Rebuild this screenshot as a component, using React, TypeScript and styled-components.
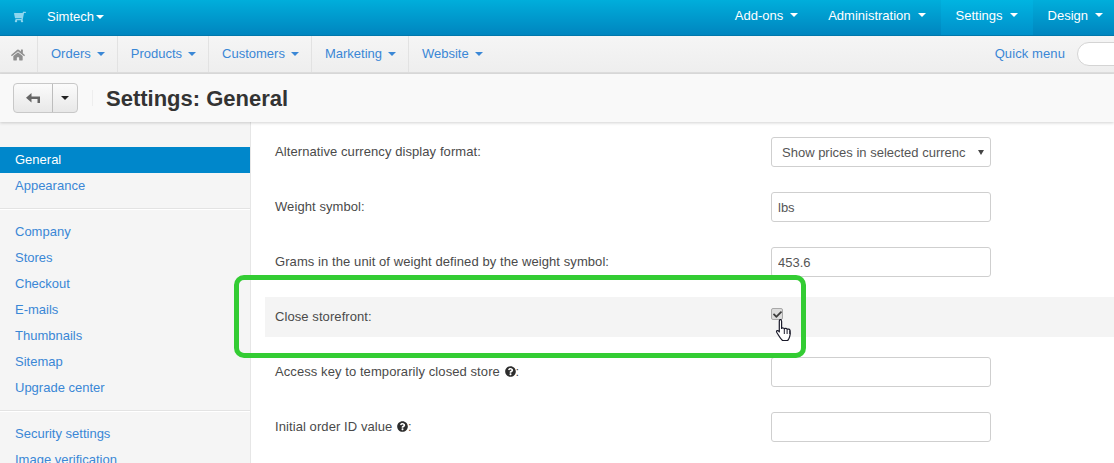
import React from "react";
import styled, { createGlobalStyle } from "styled-components";
import { FaShoppingCart, FaHome, FaQuestionCircle, FaCheck } from "react-icons/fa";

const Global = createGlobalStyle`
  html, body { margin: 0; padding: 0; background: #fff; }
  body { font-family: "Liberation Sans", Arial, sans-serif; font-size: 13px; }
  * { box-sizing: border-box; }
`;

const Page = styled.div`
  position: relative;
  width: 1114px;
  height: 463px;
  overflow: hidden;
  background: #fff;
`;

const TopBar = styled.header`
  height: 36px;
  display: flex;
  justify-content: space-between;
  background: linear-gradient(to bottom, #00aedb, #0085bf);
  border-bottom: 1px solid #0078ab;
  color: #fff;
`;

const Brand = styled.div`
  display: flex;
  align-items: center;
  padding-left: 14px;
  padding-bottom: 2px;
  svg { color: #8ed6ee; width: 12px; height: 12px; margin-right: 21px; transform: scaleX(-1); }
`;

const Caret = styled.span<{ $color?: string; $gap?: number }>`
  display: inline-block;
  width: 0;
  height: 0;
  margin-left: ${p => p.$gap ?? 7}px;
  vertical-align: 2px;
  border-top: 4px solid ${p => p.$color ?? "#fff"};
  border-left: 4px solid transparent;
  border-right: 4px solid transparent;
`;

const TopNav = styled.nav`
  display: flex;
  margin-right: -4px;
`;

const TopItem = styled.a<{ $active?: boolean }>`
  display: flex;
  align-items: center;
  padding: 0 15px 5px;
  white-space: nowrap;
  color: #fff;
  background: ${p => (p.$active ? "linear-gradient(to bottom, #00b4e1, #0090ca)" : "transparent")};
`;

const SubBar = styled.div`
  height: 38px;
  display: flex;
  justify-content: space-between;
  background: linear-gradient(to bottom, #f5f5f5, #eeeeee);
  border-bottom: 2px solid #dedede;
`;

const SubNav = styled.nav`
  display: flex;
`;

const HomeItem = styled.a`
  width: 38px;
  display: flex;
  align-items: center;
  justify-content: center;
  padding-right: 2px;
  border-right: 1px solid #e2e2e2;
  svg { color: #8f8f8f; width: 14px; height: 14px; margin-top: 2px; }
`;

const SubItem = styled.a`
  display: flex;
  align-items: center;
  padding: 0 12px 1px 13px;
  color: #3a87d6;
  white-space: nowrap;
  border-right: 1px solid #e2e2e2;
  &:last-child { border-right: none; }
`;

const Quick = styled.div`
  display: flex;
  align-items: center;
  gap: 12px;
  color: #3a87d6;
  padding-bottom: 2px;
  margin-right: -39px;
  letter-spacing: 0.1px;
`;

const QuickSwitch = styled.span`
  width: 76px;
  height: 24px;
  border: 1px solid #d4d4d4;
  border-radius: 12px;
  background: #fff;
  margin-top: 2px;
`;

const TitleBar = styled.div`
  height: 48px;
  display: flex;
  align-items: center;
  padding-left: 13px;
  background: #f9f9f9;
  position: relative;
  box-shadow: 0 1px 3px rgba(0, 0, 0, 0.18);
`;

const BtnGroup = styled.div`
  display: flex;
  height: 30px;
  width: 65px;
  border: 1px solid #c8c8c8;
  border-radius: 4px;
  background: linear-gradient(to bottom, #fbfbfb, #e8e8e8);
`;

const BackBtn = styled.span`
  width: 39px;
  display: flex;
  align-items: center;
  justify-content: center;
  border-right: 1px solid #bdbdbd;
`;

const MoreBtn = styled.span`
  flex: 1;
  display: flex;
  align-items: center;
  justify-content: center;
`;

const Divider = styled.span`
  width: 1px;
  height: 16px;
  margin: 0 13px 0 14px;
  background: #eeeeee;
`;

const Title = styled.h1`
  margin: 2px 0 0;
  font-size: 22px;
  line-height: 30px;
  font-weight: 700;
  color: #333;
`;

const Body = styled.div`
  display: flex;
  height: 341px;
`;

const Side = styled.aside`
  width: 251px;
  flex: none;
  padding-top: 25px;
  background: #f5f5f5;
  border-right: 1px solid #e6e6e6;
`;

const SideItem = styled.a<{ $active?: boolean }>`
  display: block;
  height: 26px;
  line-height: 25px;
  padding-left: 15px;
  color: ${p => (p.$active ? "#fff" : "#3a87d6")};
  background: ${p => (p.$active ? "#0087cb" : "transparent")};
`;

const SideRule = styled.hr`
  margin: 9px 0;
  height: 2px;
  border: none;
  border-top: 1px solid #e3e3e3;
  border-bottom: 1px solid #fff;
`;

const Content = styled.main`
  flex: 1;
  padding: 15px 0 0 14px;
  color: #4a4a4a;
`;

const Row = styled.div<{ $hover?: boolean }>`
  display: flex;
  align-items: center;
  height: ${p => (p.$hover ? 40 : 30)}px;
  margin: ${p => (p.$hover ? "-5px 0 20px" : "0 0 25px")};
  padding-left: 10px;
  background: ${p => (p.$hover ? "#f4f4f4" : "transparent")};
`;

const Label = styled.label`
  width: 496px;
  flex: none;
  padding-bottom: 2px;
  display: flex;
  align-items: center;
  letter-spacing: 0.08px;
  white-space: pre;
  svg { width: 11px; height: 11px; margin-left: 1px; color: #2d2d2d; }
`;

const TextInput = styled.input`
  width: 220px;
  height: 30px;
  padding: 0 6px;
  border: 1px solid #cfcfcf;
  border-radius: 3px;
  background: #fff;
  color: #555;
  font: 13px "Liberation Sans", Arial, sans-serif;
`;

const SelectBox = styled.div`
  width: 220px;
  height: 30px;
  position: relative;
  padding: 1px 24px 0 10px;
  border: 1px solid #cfcfcf;
  border-radius: 3px;
  background: #fff;
  color: #555;
  line-height: 28px;
  white-space: nowrap;
`;

const SelectArrow = styled.span`
  position: absolute;
  right: 6px;
  top: 12px;
  border-top: 5px solid #444;
  border-left: 3px solid transparent;
  border-right: 3px solid transparent;
`;

const Check = styled.span`
  width: 12px;
  height: 12px;
  margin-top: -6px;
  display: flex;
  align-items: center;
  justify-content: center;
  border: 1px solid #a8a8a8;
  border-radius: 2px;
  background: #dcdcdc;
  svg { width: 9px; height: 9px; color: #3c3c3c; }
`;

const Highlight = styled.div`
  position: absolute;
  left: 234px;
  top: 275px;
  width: 572px;
  height: 83px;
  border: 5px solid #33cc33;
  border-radius: 10px;
  pointer-events: none;
`;

const Cursor = styled.svg`
  position: absolute;
  left: 775px;
  top: 318px;
  width: 19px;
  height: 24px;
`;

const top = ["Add-ons", "Administration", "Settings", "Design"];
const sub = ["Orders", "Products", "Customers", "Marketing", "Website"];

export default function App() {
  return (
    <Page>
      <Global />
      <TopBar>
        <Brand>
          <FaShoppingCart />
          Simtech
          <Caret $gap={2} />
        </Brand>
        <TopNav>
          {top.map(t => (
            <TopItem key={t} $active={t === "Settings"}>
              {t}
              <Caret />
            </TopItem>
          ))}
        </TopNav>
      </TopBar>
      <SubBar>
        <SubNav>
          <HomeItem><FaHome /></HomeItem>
          {sub.map(t => (
            <SubItem key={t}>
              {t}
              <Caret $color="#3a87d6" $gap={6} />
            </SubItem>
          ))}
        </SubNav>
        <Quick>
          Quick menu
          <QuickSwitch />
        </Quick>
      </SubBar>
      <TitleBar>
        <BtnGroup>
          <BackBtn>
            <svg width="14" height="10" viewBox="0 0 14 10">
              <path d="M5.500 0L0 4.700l5.500 4.800V6h6v4H14V3.500H5.500z" fill="#666" />
            </svg>
          </BackBtn>
          <MoreBtn><Caret $color="#222" $gap={0} /></MoreBtn>
        </BtnGroup>
        <Divider />
        <Title>Settings: General</Title>
      </TitleBar>
      <Body>
        <Side>
          <SideItem $active>General</SideItem>
          <SideItem>Appearance</SideItem>
          <SideRule />
          <SideItem>Company</SideItem>
          <SideItem>Stores</SideItem>
          <SideItem>Checkout</SideItem>
          <SideItem>E-mails</SideItem>
          <SideItem>Thumbnails</SideItem>
          <SideItem>Sitemap</SideItem>
          <SideItem>Upgrade center</SideItem>
          <SideRule />
          <SideItem>Security settings</SideItem>
          <SideItem>Image verification</SideItem>
        </Side>
        <Content>
          <Row>
            <Label>Alternative currency display format:</Label>
            <SelectBox>
              Show prices in selected currenc
              <SelectArrow />
            </SelectBox>
          </Row>
          <Row>
            <Label>Weight symbol:</Label>
            <TextInput readOnly value="lbs" />
          </Row>
          <Row>
            <Label>Grams in the unit of weight defined by the weight symbol:</Label>
            <TextInput readOnly value="453.6" />
          </Row>
          <Row $hover>
            <Label>Close storefront:</Label>
            <Check><FaCheck /></Check>
          </Row>
          <Row>
            <Label>Access key to temporarily closed store <FaQuestionCircle />:</Label>
            <TextInput readOnly value="" />
          </Row>
          <Row>
            <Label>Initial order ID value <FaQuestionCircle />:</Label>
            <TextInput readOnly value="" />
          </Row>
        </Content>
      </Body>
      <Highlight />
      <Cursor viewBox="0 0 19 24">
        <path
          d="M5 1.500c1 0 1.600.7 1.600 1.700v7.300c.5-.7 2.400-.8 2.800.3.7-.7 2.400-.6 2.800.5.8-.5 2.500-.3 2.800 1.100.3 1.900.3 4.300-.3 6.300-.5 1.800-1.300 3-2 3.800H7.500c-1.300-1.300-3-3.600-4.300-5.800-.8-1.300-2-2.600-1.700-3.500.4-1 1.900-.6 2.800.7V3.200c0-1 .6-1.700 1.700-1.700z"
          fill="#fff"
          stroke="#1a1a2a"
          strokeWidth="1.200"
          strokeLinejoin="round"
        />
        <path d="M9.300 11v5M12.100 11.500v4.500M14.800 12.500v3.500" stroke="#1a1a2a" strokeWidth="1" fill="none" />
      </Cursor>
    </Page>
  );
}
